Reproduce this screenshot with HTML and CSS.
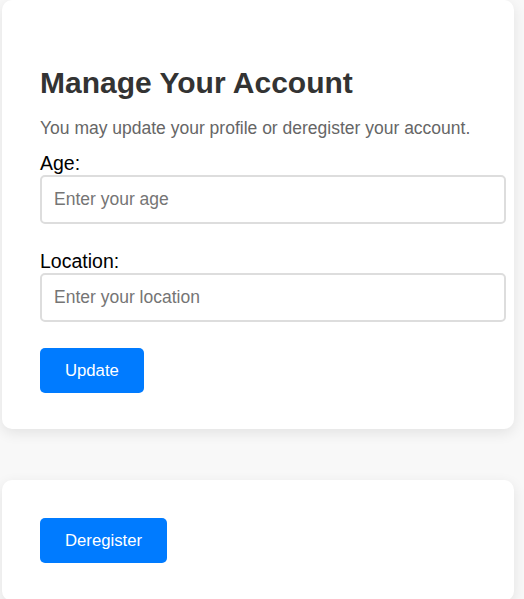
FILE: index.html
```html
<!DOCTYPE html>
<html lang="en">
<head>
<meta charset="utf-8">
<title>Manage Your Account</title>
<link rel="stylesheet" href="styles.css">
</head>
<body>
<div class="container">
  <section class="card card-profile">
    <h2 class="title">Manage Your Account</h2>
    <p class="subtitle">You may update your profile or deregister your account.</p>
    <form class="form">
      <label class="label" for="age">Age:</label>
      <input class="input" id="age" type="text" placeholder="Enter your age">
      <label class="label label-spaced" for="location">Location:</label>
      <input class="input" id="location" type="text" placeholder="Enter your location">
      <button class="btn btn-update" type="button">Update</button>
    </form>
  </section>
  <section class="card card-deregister">
    <button class="btn" type="button">Deregister</button>
  </section>
</div>
</body>
</html>
```

FILE: styles.css
```css
html, body {
  margin: 0;
  padding: 0;
}
body {
  background: #f8f8f8;
  font-family: "Liberation Sans", Arial, sans-serif;
  overflow: hidden;
}
.container {
  display: flex;
  flex-direction: column;
  gap: 51px;
  margin: 0 10px 0 2px;
}
.card {
  background: #ffffff;
  border-radius: 10px;
  box-shadow: 0 4px 14px rgba(0, 0, 0, 0.09);
  padding: 40px 8px 36px 38px;
}
.card-deregister {
  padding-top: 38px;
  padding-bottom: 38px;
}
.title {
  margin: 26px 0 18px;
  font-size: 30px;
  line-height: 34px;
  font-weight: bold;
  color: #333333;
}
.subtitle {
  margin: 0 0 14px;
  font-size: 17.5px;
  line-height: 20px;
  color: #666666;
}
.form {
  display: flex;
  flex-direction: column;
  align-items: flex-start;
  margin: 0;
}
.label {
  display: block;
  font-size: 19.5px;
  line-height: 23px;
  color: #000000;
}
.label-spaced {
  margin-top: 26px;
}
.input {
  box-sizing: border-box;
  width: 100%;
  height: 49px;
  margin: 0;
  padding: 0 12px;
  border: 2px solid #dddddd;
  border-radius: 5px;
  font-family: "Liberation Sans", Arial, sans-serif;
  font-size: 17.5px;
  color: #333333;
  background: #ffffff;
  outline: none;
}
.input::placeholder {
  color: #757575;
}
.btn {
  display: inline-block;
  padding: 13px 25px;
  border: none;
  border-radius: 5px;
  background: #007bff;
  color: #ffffff;
  font-family: "Liberation Sans", Arial, sans-serif;
  font-size: 16.7px;
  line-height: 19px;
  cursor: pointer;
}
.btn-update {
  margin-top: 26px;
}
```
